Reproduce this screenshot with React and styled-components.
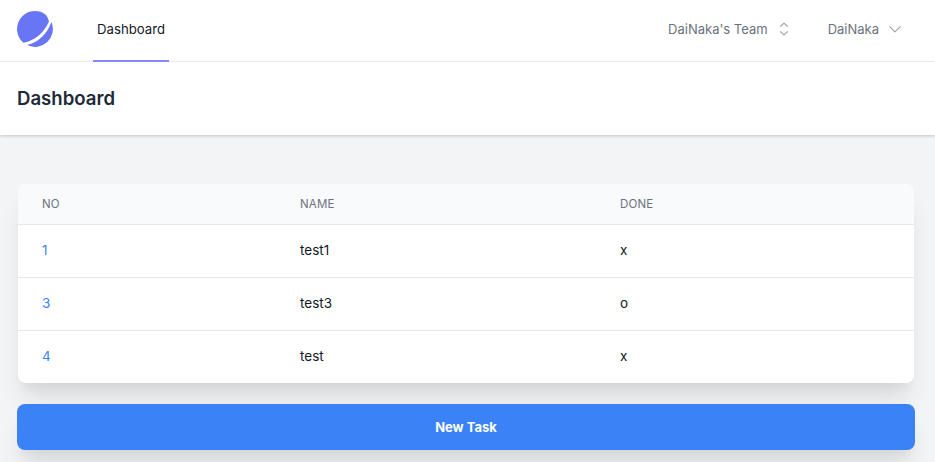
import React from 'react'
import styled, { createGlobalStyle } from 'styled-components'

const rows = [
  { no: 1, name: 'test1', done: 'x' },
  { no: 3, name: 'test3', done: 'o' },
  { no: 4, name: 'test', done: 'x' },
]

const App = () => {
  return (
    <Page>
      <GlobalStyle />
      <Nav>
        <Left>
          <Logo viewBox="0 0 36 36">
            <path d="M18 0A18 18 0 0 0 6.5 31.8Q24 28 32 10.5C31.4 8 30.2 5.4 28.5 3.4A18 18 0 0 0 18 0Z" />
            <path d="M34.5 11A18 18 0 0 1 10 34.1Q27 30 34.5 11Z" />
          </Logo>
          <NavLink>Dashboard</NavLink>
        </Left>
        <Right>
          <Menu>
            DaiNaka's Team
            <MenuIcon viewBox="0 0 20 20">
              <path d="M5.8 6.6 10 2.6l4.2 4M5.8 13.4 10 17.4l4.2-4" />
            </MenuIcon>
          </Menu>
          <Menu>
            DaiNaka
            <MenuIcon viewBox="0 0 20 20">
              <path d="M3.5 7 10 13.5 16.5 7" />
            </MenuIcon>
          </Menu>
        </Right>
      </Nav>
      <Header>
        <Title>Dashboard</Title>
      </Header>
      <Main>
        <Card>
          <Table>
            <thead>
              <tr>
                <Th $width="258px">No</Th>
                <Th $width="320px">Name</Th>
                <Th>Done</Th>
              </tr>
            </thead>
            <tbody>
              {rows.map((row) => (
                <tr key={row.no}>
                  <Td><IdLink>{row.no}</IdLink></Td>
                  <Td>{row.name}</Td>
                  <Td>{row.done}</Td>
                </tr>
              ))}
            </tbody>
          </Table>
        </Card>
        <NewButton>New Task</NewButton>
      </Main>
    </Page>
  )
}

const GlobalStyle = createGlobalStyle`
  html, body {
    margin: 0;
    padding: 0;
    background: #f3f4f6;
    font-family: Inter, "Noto Sans", sans-serif;
    overflow: hidden;
  }
  * {
    box-sizing: border-box;
  }
`

const Page = styled.div`
  min-height: 462px;
  background: #f3f4f6;
`

const Nav = styled.nav`
  height: 62px;
  background: #fff;
  border-bottom: 1px solid #f3f4f6;
  padding: 0 17px;
  display: flex;
  justify-content: space-between;
`

const Left = styled.div`
  height: 62px;
  display: flex;
  align-items: center;
`

const Logo = styled.svg`
  width: 36px;
  height: 36px;
  display: block;
  margin-bottom: 4px;
  fill: #6875f5;
`

const NavLink = styled.a`
  height: 62px;
  margin-left: 40px;
  padding: 0 4px 2px;
  display: flex;
  align-items: center;
  font-size: 13.2px;
  line-height: 20px;
  color: #111827;
  border-bottom: 2px solid #818cf8;
`

const Right = styled.div`
  display: flex;
  align-items: center;
  gap: 36px;
  padding-right: 15px;
  padding-bottom: 3px;
`

const Menu = styled.div`
  display: flex;
  align-items: center;
  font-size: 13px;
  line-height: 20px;
  color: #6b7280;
`

const MenuIcon = styled.svg`
  width: 16px;
  height: 16px;
  margin-left: 8px;
  fill: none;
  stroke: #9ca3af;
  stroke-width: 1.4;
  stroke-linecap: round;
  stroke-linejoin: round;
`

const Header = styled.header`
  height: 73px;
  background: #fff;
  padding: 0 17px 2px;
  display: flex;
  align-items: center;
  box-shadow: 0 1px 3px rgba(0, 0, 0, 0.2);
`

const Title = styled.h2`
  margin: 0;
  font-size: 18.6px;
  line-height: 28px;
  font-weight: 600;
  color: #1f2937;
`

const Main = styled.main`
  padding: 49px 20px 0 17px;
`

const Card = styled.div`
  margin: 0 1px;
  background: #fff;
  border-radius: 8px;
  overflow: hidden;
  box-shadow: 0 20px 25px -5px rgba(0, 0, 0, 0.1), 0 10px 10px -5px rgba(0, 0, 0, 0.04);
`

const Table = styled.table`
  width: 100%;
  border-collapse: collapse;
  table-layout: fixed;
`

const Th = styled.th`
  width: ${(p) => p.$width || 'auto'};
  height: 40px;
  padding: 0 24px;
  background: #f9fafb;
  border-bottom: 1px solid #e5e7eb;
  text-align: left;
  font-size: 11.5px;
  font-weight: 400;
  letter-spacing: 0.2px;
  text-transform: uppercase;
  color: #6b7280;
`

const Td = styled.td`
  height: 53px;
  padding: 0 24px 1px;
  font-size: 13.5px;
  color: #111827;
  border-top: 1px solid #e5e7eb;
  tr:first-child > & {
    border-top: none;
  }
`

const IdLink = styled.a`
  color: #3b82f6;
`

const NewButton = styled.button`
  display: block;
  width: 100%;
  height: 46px;
  margin-top: 21px;
  border: none;
  border-radius: 8px;
  background: #3b82f6;
  color: #fff;
  font-family: inherit;
  font-size: 13px;
  font-weight: 700;
  box-shadow: 0 20px 25px -5px rgba(0, 0, 0, 0.1), 0 10px 10px -5px rgba(0, 0, 0, 0.04);
`

export default App
